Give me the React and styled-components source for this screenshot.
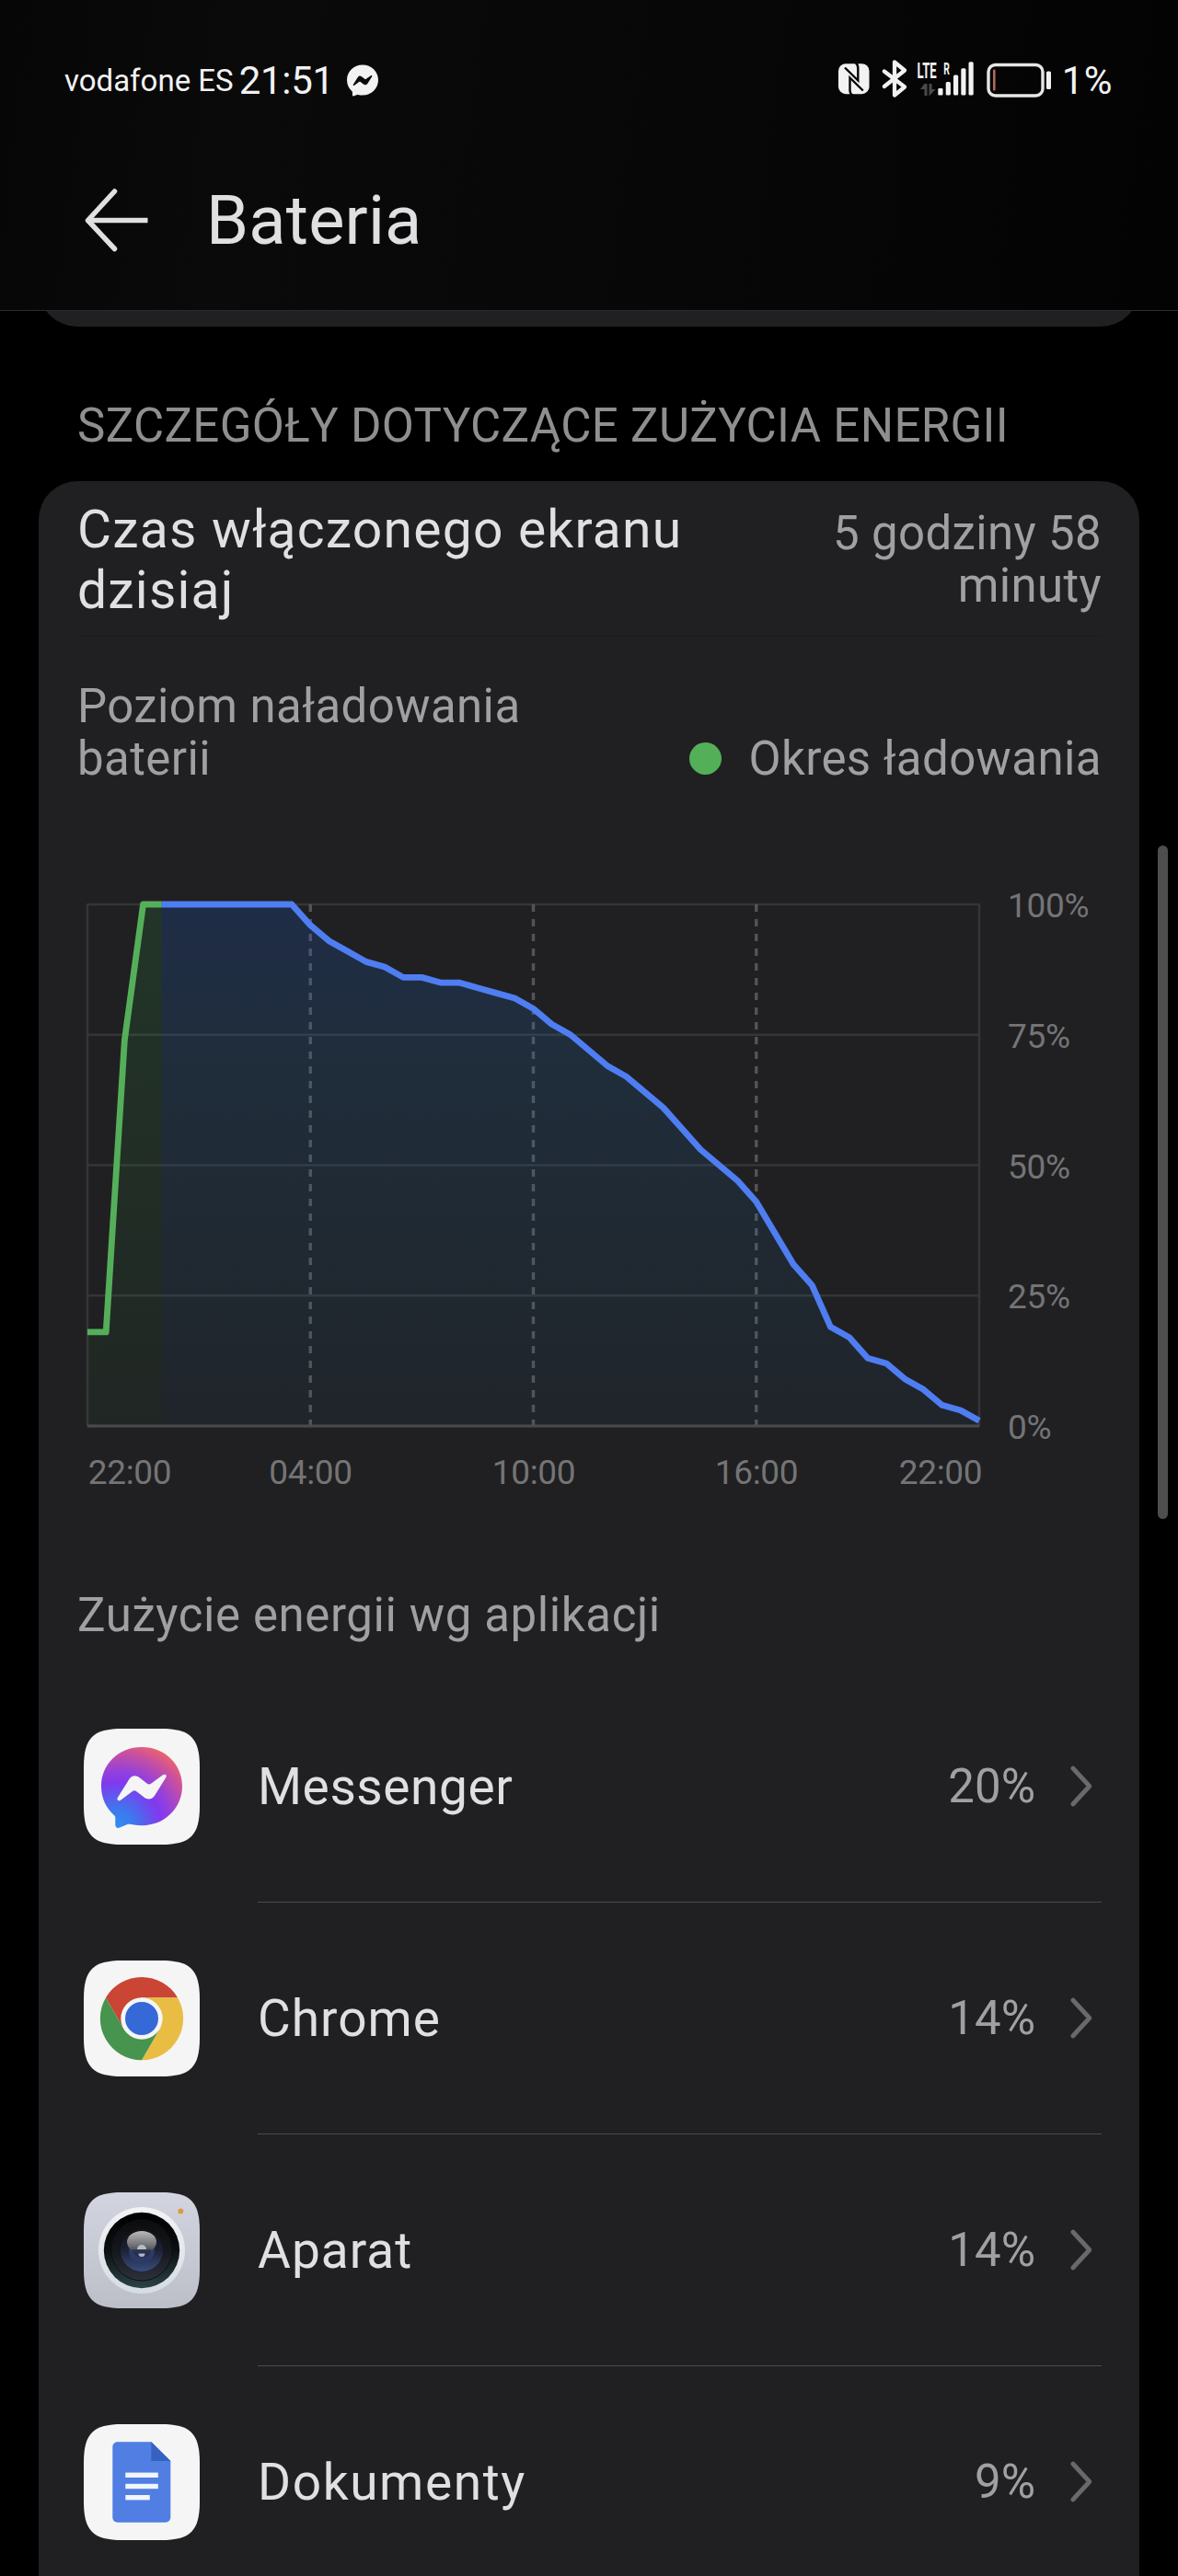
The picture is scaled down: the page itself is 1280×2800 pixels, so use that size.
import styled, { createGlobalStyle } from "styled-components"

const GlobalStyle = createGlobalStyle`
* { box-sizing: border-box; }
body {
  margin: 0;
  background: #000;
  font-family: Roboto, "Noto Sans", sans-serif;
}
`

const Screen = styled.div`
position: relative;
width: 1280px;
height: 2800px;
overflow: hidden;
background: #000;
color: #e0e0e2;
`

const Header = styled.header`
height: 338px;
background: linear-gradient(97deg, #060606, #0a0a0a 20%, #070707 60%, #030303);
border-bottom: 1px solid #2c2c2e;
`

const StatusBar = styled.div`
height: 174px;
padding: 0 71px 0 70px;
display: flex;
align-items: center;
justify-content: space-between;
color: #f2f2f2;
`

const StatusGroup = styled.div`
display: flex;
align-items: center;
`

const Carrier = styled.span`
font-size: 33px;
margin-right: 6px;
`

const Clock = styled.span`
font-size: 42px;
letter-spacing: -0.3px;
margin-right: 14px;
`

const BatteryPercent = styled.span`
font-size: 42px;
letter-spacing: 0.5px;
margin-left: 11px;
`

const TitleBar = styled.div`
height: 131px;
padding-left: 90px;
display: flex;
align-items: center;
gap: 60px;
`

const Title = styled.h1`
margin: 0;
font-size: 74px;
font-weight: 400;
letter-spacing: 0.2px;
`

// bottom edge of the card that has scrolled under the header
const ScrolledPast = styled.div`
height: 17px;
margin: 0 42px;
overflow: hidden;
display: flex;
align-items: flex-end;
`

const ScrolledCard = styled.div`
flex: none;
width: 100%;
height: 90px;
background: #202022;
border-radius: 42px;
`

const SectionLabel = styled.h2`
margin: 0;
padding: 78px 84px 30px;
font-size: 51px;
font-weight: 400;
line-height: 60px;
letter-spacing: 0.35px;
white-space: nowrap;
color: #8f8f8f;
`

const Card = styled.section`
margin: 0 42px;
padding: 0 41px 0 42px;
background: #202022;
border-radius: 42px 42px 0 0;
`

const ScreenTime = styled.div`
padding: 20px 0 16px;
display: flex;
align-items: center;
justify-content: space-between;
border-bottom: 1px solid #1b1b1d;
`

const ScreenTimeLabel = styled.div`
width: 700px;
font-size: 57px;
line-height: 66px;
letter-spacing: 1.2px;
`

const ScreenTimeValue = styled.div`
width: 330px;
padding-bottom: 3px;
font-size: 51px;
line-height: 57px;
letter-spacing: 0.35px;
text-align: right;
color: #a0a0a2;
`

const Legend = styled.div`
margin-top: 47px;
display: flex;
align-items: flex-end;
justify-content: space-between;
font-size: 51px;
line-height: 57px;
letter-spacing: 0.4px;
color: #a0a0a2;
`

const LegendLabel = styled.div`
width: 520px;
`

const LegendItem = styled.div`
display: flex;
align-items: center;
gap: 29px;
`

const Dot = styled.span`
width: 35px;
height: 35px;
border-radius: 50%;
background: #54af59;
`

const ChartBox = styled.svg`
display: block;
width: 1112px;
height: 670px;
margin-top: 107px;
font-size: 37px;
fill: #747476;
`

const ListTitle = styled.h3`
margin: 96px 0 30px;
font-size: 51px;
font-weight: 400;
line-height: 60px;
letter-spacing: 0.6px;
color: #a0a0a2;
`

const AppRow = styled.div`
height: 252px;
padding-left: 7px;
display: flex;
align-items: center;
gap: 63px;
`

const AppBody = styled.div`
flex: 1;
height: 100%;
display: flex;
align-items: center;
border-bottom: 1px solid #4a4a4c;
`

const AppName = styled.span`
flex: 1;
font-size: 55px;
letter-spacing: ${({ $track }) => $track}px;
`

const AppPercent = styled.span`
font-size: 51px;
margin-right: 32px;
color: #a0a0a2;
`

const Scrollbar = styled.div`
position: absolute;
top: 919px;
left: 1258px;
width: 11px;
height: 732px;
border-radius: 6px;
background: #4e4e4e;
`

const MessengerShape = ({ fill, bolt }) => (
  <>
    <path
      fill={fill}
      d="M63 20C38.300 20 19 38.500 19 62.500C19 76 24.800 86.800 33.200 94.200C34 95 34.300 95.800 34.300 97V104.500C34.300 107.300 36.500 108.600 39 107.600L47.500 104C48.300 103.600 49 103.500 50 103.800C54 104.700 58.500 105.200 63 105.200C87.700 105.200 107 86.500 107 62.500C107 38.500 87.700 20 63 20Z"
    />
    <path
      fill={bolt}
      d="M36.800 75L49 55.500C52 50.700 56.500 50 61 53.400L69 59.700C70.500 60.800 71.500 60.800 73 59.700L86 50.300C88.500 48.700 90.800 50.500 89.300 53L77.500 72C74.500 77 70 78 65.500 74.600L57 68C55.500 67 54.500 67 53 68L40 77.700C37.700 79.300 35.400 77.400 36.800 75Z"
    />
  </>
)

const MessengerBadge = () => (
  <svg width="34" height="35" viewBox="19 19.500 88 89">
    <MessengerShape fill="#f2f2f2" bolt="#0a0a0a" />
  </svg>
)

// nfc, bluetooth, signal and battery share one strip, 1px per unit
const StatusIcons = () => (
  <svg width="233" height="64" viewBox="910 55 233 64" fill="#f2f2f2">
    <rect x="911" y="69.200" width="33.500" height="33" rx="8" />
    <g fill="none" stroke="#060606" strokeWidth="2.400">
      <path d="M918 73.500L932.300 87.500V74C932.300 71 931.500 69.500 929.500 68" />
      <path d="M937.800 98.500L923.500 84.500V98C923.500 101 924.500 102.500 926.500 104" />
    </g>
    <path
      fill="none"
      stroke="#f2f2f2"
      strokeWidth="4.300"
      strokeLinecap="round"
      strokeLinejoin="round"
      d="M960.800 77.500L983 94.500L972 103.500V67.500L983 76.500L960.800 94"
    />
    <g transform="translate(996.500 85) scale(0.560 1)" fontWeight="700">
      <text fontSize="23.500">
        LTE
        <tspan x="51.500" y="-4" fontSize="18.500">R</tspan>
      </text>
    </g>
    <g fill="#4a4a4a">
      <path d="M1004.500 91H1007.500V104H1004.500V97H1000Z" />
      <path d="M1009.500 91H1012.500V97H1016.500L1010 104H1009.500Z" />
    </g>
    <rect x="1019.300" y="96" width="5.200" height="7.600" rx="1" />
    <rect x="1027.700" y="89" width="5.200" height="14.600" rx="1.500" />
    <rect x="1036" y="81.500" width="5.200" height="22.100" rx="1.500" />
    <rect x="1044.300" y="74.300" width="5.200" height="29.300" rx="1.500" />
    <rect x="1052.500" y="67.300" width="5.200" height="36.300" rx="1.500" />
    <rect x="1074" y="70.500" width="59" height="33.500" rx="7.500" fill="none" stroke="#e6e6e6" strokeWidth="3.400" />
    <rect x="1079" y="75.500" width="2.600" height="23" rx="1" fill="#b0675c" />
    <rect x="1137" y="77.500" width="5" height="19.500" rx="1.500" />
  </svg>
)

const BackArrow = () => (
  <svg width="74" height="74" viewBox="0 0 74 74" fill="none" stroke="#e0e0e2" strokeWidth="5.500" strokeLinecap="round" strokeLinejoin="round">
    <path d="M34.500 5L5.500 36.500L34.500 67.500" />
    <path d="M6 36.500H70.500" strokeLinecap="butt" />
  </svg>
)

const Chevron = () => (
  <svg width="40" height="50" viewBox="0 0 40 50" fill="none" stroke="#69696b" strokeWidth="4.800" strokeLinecap="round" strokeLinejoin="round">
    <path d="M8.800 5L26.800 24.500L8.800 44" />
  </svg>
)

const Tile = ({ fill = "#f5f5f5", children }) => (
  <svg width="126" height="126" viewBox="0 0 126 126">
    <path fill={fill} d="M0 42C0 10 10 0 42 0H84C116 0 126 10 126 42V84C126 116 116 126 84 126H42C10 126 0 116 0 84Z" />
    {children}
  </svg>
)

const MessengerIcon = () => (
  <Tile>
    <defs>
      <radialGradient id="messenger" gradientUnits="userSpaceOnUse" cx="36" cy="106" r="96">
        <stop offset="0" stopColor="#2f8df2" />
        <stop offset="0.2" stopColor="#3f76ee" />
        <stop offset="0.5" stopColor="#8139ee" />
        <stop offset="0.62" stopColor="#9340dc" />
        <stop offset="0.85" stopColor="#cc519c" />
        <stop offset="1" stopColor="#ee6766" />
      </radialGradient>
    </defs>
    <MessengerShape fill="url(#messenger)" bolt="#f5f5f5" />
  </Tile>
)

const ChromeIcon = () => (
  <Tile>
    <path fill="#ca4534" d="M23.900 40.400A45.200 45.200 0 0 1 102.100 40.400H63L43.400 74.300Z" />
    <path fill="#e9bd43" d="M102.100 40.400A45.200 45.200 0 0 1 63 108.200L82.600 74.300L63 40.400Z" />
    <path fill="#46944d" d="M63 108.200A45.200 45.200 0 0 1 23.900 40.400L43.400 74.300H82.600Z" />
    <circle cx="63" cy="63" r="22.700" fill="#f5f5f5" />
    <circle cx="63" cy="63" r="18" fill="#3569d8" />
  </Tile>
)

const CameraIcon = () => (
  <Tile fill="url(#cameraBody)">
    <defs>
      <linearGradient id="cameraBody" x1="0" y1="0" x2="0" y2="1">
        <stop offset="0" stopColor="#d2d5df" />
        <stop offset="1" stopColor="#bcbfc8" />
      </linearGradient>
      <linearGradient id="cameraRing" x1="0" y1="0" x2="0" y2="1">
        <stop offset="0" stopColor="#f3f3f5" />
        <stop offset="1" stopColor="#d6dce4" />
      </linearGradient>
      <linearGradient id="cameraLens" x1="0" y1="0" x2="0" y2="1">
        <stop offset="0" stopColor="#000" />
        <stop offset="0.5" stopColor="#0c0f12" />
        <stop offset="1" stopColor="#2c4346" />
      </linearGradient>
      <linearGradient id="cameraMiddle" x1="0" y1="0" x2="0" y2="1">
        <stop offset="0" stopColor="#0c0c0d" />
        <stop offset="0.5" stopColor="#15171c" />
        <stop offset="1" stopColor="#2e313c" />
      </linearGradient>
      <linearGradient id="cameraGlass" x1="0" y1="0" x2="0" y2="1">
        <stop offset="0" stopColor="#101115" />
        <stop offset="0.5" stopColor="#1c2236" />
        <stop offset="1" stopColor="#3a4d80" />
      </linearGradient>
      <linearGradient id="cameraShine" x1="0" y1="0" x2="0" y2="1">
        <stop offset="0" stopColor="#b9b9b9" />
        <stop offset="0.6" stopColor="#77777a" />
        <stop offset="1" stopColor="#3c3f4c" />
      </linearGradient>
    </defs>
    <circle cx="63" cy="63" r="47" fill="url(#cameraRing)" />
    <circle cx="63" cy="63" r="41.200" fill="url(#cameraLens)" />
    <circle cx="63" cy="63" r="33" fill="url(#cameraMiddle)" stroke="#0d1114" strokeWidth="1" />
    <circle cx="63" cy="63" r="23" fill="url(#cameraGlass)" />
    <circle cx="63" cy="63" r="14" fill="#2c3a68" />
    <ellipse cx="63" cy="54" rx="16" ry="12" fill="url(#cameraShine)" />
    <path fill="#262b42" d="M53 62H73A10 9 0 0 1 53 62Z" opacity="0.7" />
    <path fill="#b5bccb" d="M58 62A5 5 0 0 1 68 62Z" />
    <path fill="#a9b6d2" d="M59.500 66.500H66.500A3.500 3.500 0 0 1 59.500 66.500Z" />
    <circle cx="105.300" cy="20.400" r="3" fill="#d99f3e" />
  </Tile>
)

const DocsIcon = () => (
  <Tile>
    <path fill="#507ee2" d="M37 19.200H73.500L94.300 40V101C94.300 104.500 92 106.700 88.500 106.700H37C33.500 106.700 31.300 104.500 31.300 101V25C31.300 21.500 33.500 19.200 37 19.200Z" />
    <path fill="#3561c1" d="M73.300 19.200L94.300 40H73.300Z" />
    <g fill="#f2f5fc">
      <rect x="45.300" y="52.600" width="35.500" height="5.400" />
      <rect x="45.300" y="64.800" width="35.500" height="5.400" />
      <rect x="45.300" y="77" width="26.500" height="5.400" />
    </g>
  </Tile>
)

// one reading every half hour, 22:00 to 22:00
const levels = [
  18, 18, 74, 100, 100, 100, 100, 100, 100, 100, 100, 100, 96, 93, 91, 89, 88,
  86, 86, 85, 85, 84, 83, 82, 80, 77, 75, 72, 69, 67, 64, 61, 57, 53, 50, 47,
  43, 37, 31, 27, 19, 17, 13, 12, 9, 7, 4, 3, 1,
]
const chargedAt = 4

const left = 11
const right = 980
const top = 23
const bottom = 590

const px = (i) => left + (i * (right - left)) / 48
const py = (v) => bottom - (v * (bottom - top)) / 100
const line = (from, to) =>
  levels.slice(from, to + 1).map((v, i) => `${px(from + i)},${py(v)}`).join(" ")
const area = (from, to) =>
  `${px(from)},${bottom} ${line(from, to)} ${px(to)},${bottom}`

const hours = [
  { label: "22:00", x: 57 },
  { label: "04:00", x: 253.5 },
  { label: "10:00", x: 496 },
  { label: "16:00", x: 738 },
  { label: "22:00", x: 938 },
]

const BatteryChart = () => (
  <ChartBox viewBox="0 0 1112 670">
    <defs>
      <linearGradient id="drain" gradientUnits="userSpaceOnUse" x1="0" y1={top} x2="0" y2={bottom}>
        <stop offset="0" stopColor="#1c5cdc" stopOpacity="0.2" />
        <stop offset="0.3" stopColor="#1c70b8" stopOpacity="0.17" />
        <stop offset="1" stopColor="#1c6498" stopOpacity="0.07" />
      </linearGradient>
      <linearGradient id="charge" gradientUnits="userSpaceOnUse" x1="0" y1={top} x2="0" y2={bottom}>
        <stop offset="0" stopColor="#2a8940" stopOpacity="0.2" />
        <stop offset="1" stopColor="#2a8940" stopOpacity="0.06" />
      </linearGradient>
    </defs>
    <g fill="none" stroke="#353537" strokeWidth="2.600">
      <rect x={left} y={top} width={right - left} height={bottom - top} rx="1" />
      {[25, 50, 75].map((v) => (
        <path key={v} d={`M${left} ${py(v)}H${right}`} />
      ))}
    </g>
    {[12, 24, 36].map((i) => (
      <path key={i} d={`M${px(i)} ${top}V${bottom}`} stroke="#545456" strokeWidth="3.400" strokeDasharray="8 8" />
    ))}
    <polygon points={area(0, chargedAt)} fill="url(#charge)" />
    <polygon points={area(chargedAt, 48)} fill="url(#drain)" />
    <path d={`M${left} ${bottom}H${right}`} stroke="#4a4a4c" strokeWidth="3" />
    <g fill="none" strokeWidth="6.800" strokeLinejoin="round">
      <polyline points={line(0, chargedAt)} stroke="#55af5a" />
      <polyline points={line(chargedAt, 48)} stroke="#4f7df2" />
    </g>
    {[100, 75, 50, 25, 0].map((v) => (
      <text key={v} x="1011" y={py(v) + 14} letterSpacing="-0.300">{v}%</text>
    ))}
    {hours.map(({ label, x }, i) => (
      <text key={i} x={x} y="653" textAnchor="middle" letterSpacing="-0.300">{label}</text>
    ))}
  </ChartBox>
)

const apps = [
  { name: "Messenger", track: 0.6, percent: 20, Icon: MessengerIcon },
  { name: "Chrome", track: 1, percent: 14, Icon: ChromeIcon },
  { name: "Aparat", track: 1, percent: 14, Icon: CameraIcon },
  { name: "Dokumenty", track: 1.6, percent: 9, Icon: DocsIcon },
]

const App = () => {
  return (
    <>
      <GlobalStyle />
      <Screen>
        <Header>
          <StatusBar>
            <StatusGroup>
              <Carrier>vodafone ES</Carrier>
              <Clock>21:51</Clock>
              <MessengerBadge />
            </StatusGroup>
            <StatusGroup>
              <StatusIcons />
              <BatteryPercent>1%</BatteryPercent>
            </StatusGroup>
          </StatusBar>
          <TitleBar>
            <BackArrow />
            <Title>Bateria</Title>
          </TitleBar>
        </Header>
        <ScrolledPast>
          <ScrolledCard />
        </ScrolledPast>
        <SectionLabel>SZCZEGÓŁY DOTYCZĄCE ZUŻYCIA ENERGII</SectionLabel>
        <Card>
          <ScreenTime>
            <ScreenTimeLabel>Czas włączonego ekranu dzisiaj</ScreenTimeLabel>
            <ScreenTimeValue>5 godziny 58 minuty</ScreenTimeValue>
          </ScreenTime>
          <Legend>
            <LegendLabel>Poziom naładowania baterii</LegendLabel>
            <LegendItem>
              <Dot />
              <span>Okres ładowania</span>
            </LegendItem>
          </Legend>
          <BatteryChart />
          <ListTitle>Zużycie energii wg aplikacji</ListTitle>
          {apps.map(({ name, track, percent, Icon }) => (
            <AppRow key={name}>
              <Icon />
              <AppBody>
                <AppName $track={track}>{name}</AppName>
                <AppPercent>{percent}%</AppPercent>
                <Chevron />
              </AppBody>
            </AppRow>
          ))}
        </Card>
        <Scrollbar />
      </Screen>
    </>
  )
}

export default App
